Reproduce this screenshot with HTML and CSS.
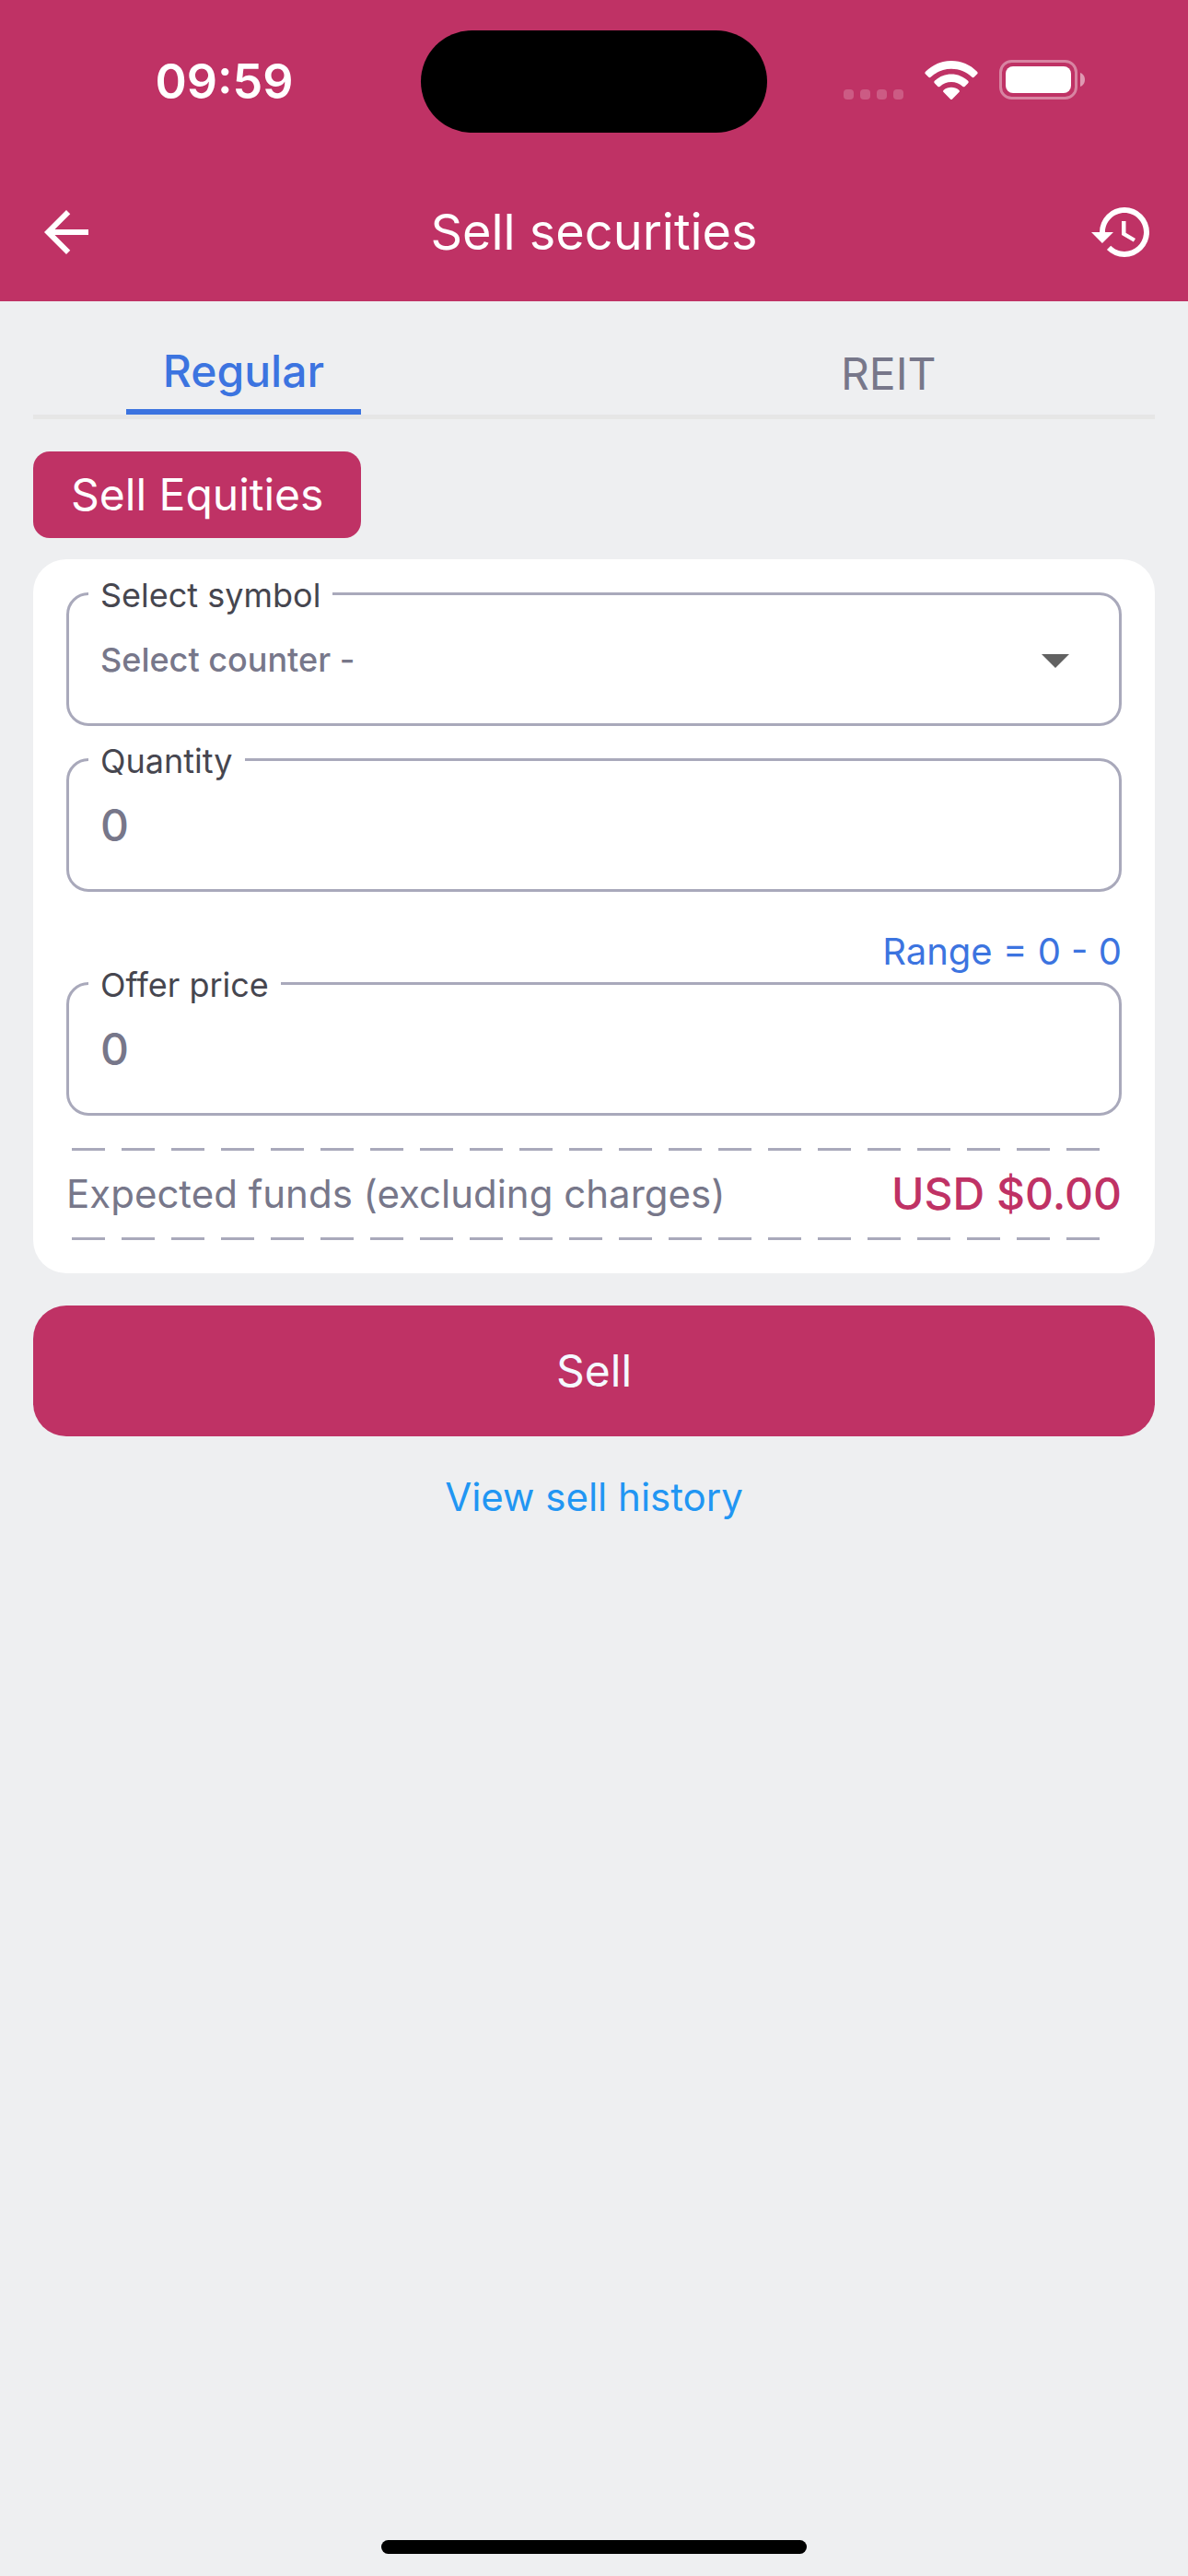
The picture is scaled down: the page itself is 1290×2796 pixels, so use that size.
FILE: index.html
```html
<!DOCTYPE html>
<html lang="en">
<head>
<meta charset="utf-8">
<meta name="viewport" content="width=device-width, initial-scale=1">
<title>Sell securities</title>
<link rel="stylesheet" href="styles.css">
</head>
<body>
<header class="header">
  <div class="status">
    <span class="time">09:59</span>
    <span class="island"></span>
    <span class="indicators">
      <svg class="signal" viewBox="0 0 65 11" aria-hidden="true"><rect width="11" height="11" rx="4"/><rect x="18" width="11" height="11" rx="4"/><rect x="36" width="11" height="11" rx="4"/><rect x="54" width="11" height="11" rx="4"/></svg>
      <svg class="wifi" viewBox="0 0 58 42" aria-hidden="true">
        <path d="M1.300 11.500C8.500 4.200 18 0 29 0s20.500 4.200 27.700 11.500c1.200 1.200 1.200 2 .2 3l-3 3c-1 .9-1.800.8-2.700-.1C45.300 12 37.500 8.800 29 8.800S12.700 12 6.800 17.400c-.9.900-1.700 1-2.700.1l-3-3c-1-1-1-1.800.2-3z"/>
        <path d="M11.100 21.600C15.800 17.200 22 14.500 29 14.500s13.200 2.700 17.900 7.100c1.100 1 1.100 1.900.1 2.900l-3.200 3.200c-.9.900-1.700.8-2.600 0-3.200-2.900-7.500-4.600-12.200-4.600s-9 1.700-12.200 4.600c-.9.800-1.700.9-2.600 0L11 24.500c-1-1-1-1.900.1-2.900z"/>
        <path d="M21 31.400c2.200-1.700 5-2.700 8-2.700s5.800 1 8 2.700c1.200.9 1.200 1.900.2 2.900l-7.100 7.100c-.8.800-1.400.8-2.200 0l-7.100-7.100c-1-1-1-2 .2-2.900z"/>
      </svg>
      <svg class="battery" viewBox="0 0 93 43" aria-hidden="true">
        <rect x="1.500" y="1.500" width="82" height="40" rx="12" fill="none" stroke="#fff" stroke-width="3" opacity=".4"/>
        <rect x="7" y="7" width="71" height="29" rx="8"/>
        <path d="M88 14c3 1 5 4 5 7.500S91 28 88 29z" opacity=".5"/>
      </svg>
    </span>
  </div>
  <div class="appbar">
    <button class="icon-button" type="button" aria-label="Back"><svg viewBox="0 0 24 24"><path d="M20 11H7.830l5.590-5.590L12 4l-8 8 8 8 1.410-1.410L7.830 13H20v-2z"/></svg></button>
    <h1 class="title">Sell securities</h1>
    <button class="icon-button" type="button" aria-label="History"><svg viewBox="0 0 24 24"><path d="M13 3a9 9 0 0 0-9 9H1l3.890 3.890.07.14L9 12H6c0-3.870 3.130-7 7-7s7 3.130 7 7-3.130 7-7 7c-1.930 0-3.680-.79-4.940-2.060l-1.420 1.420A8.954 8.954 0 0 0 13 21a9 9 0 0 0 0-18zm-1 5v5l4.280 2.540.72-1.210-3.500-2.080V8H12z"/></svg></button>
  </div>
</header>

<main class="content">
  <nav class="tabs">
    <div class="tab-slot"><a class="tab tab-active" href="#regular" aria-current="page">Regular</a></div>
    <div class="tab-slot"><a class="tab" href="#reit">REIT</a></div>
  </nav>

  <button class="chip" type="button">Sell Equities</button>

  <form class="form" id="sell-form">
    <div class="card">
      <div class="field">
        <label class="field-label" for="symbol">Select symbol</label>
        <select class="control control-select" id="symbol"><option>Select counter -</option></select>
        <svg class="caret" viewBox="0 0 30 15" aria-hidden="true"><path d="M0 0h30L15 15z"/></svg>
      </div>
      <div class="field">
        <label class="field-label" for="quantity">Quantity</label>
        <input class="control" id="quantity" type="text" inputmode="numeric" value="0">
      </div>
      <div class="price">
        <p class="range">Range = 0 - 0</p>
        <div class="field">
          <label class="field-label" for="price">Offer price</label>
          <input class="control" id="price" type="text" inputmode="decimal" value="0">
        </div>
      </div>
      <div class="summary">
        <span>Expected funds (excluding charges)</span>
        <output class="total" for="quantity price">USD $0.00</output>
      </div>
    </div>
    <button class="submit" type="submit">Sell</button>
  </form>

  <a class="history-link" href="#history">View sell history</a>
</main>

<footer class="home"><span class="home-bar"></span></footer>
</body>
</html>
```

FILE: styles.css
```css
* {
  box-sizing: border-box;
}

:root {
  --brand: #bf3265;
  --blue: #3c74e0;
  --muted: #77778a;
  --line: #a9a9bb;
  --page: #eeeff1;
}

body {
  margin: 0;
  min-height: 100vh;
  display: flex;
  flex-direction: column;
  background: var(--page);
  color: var(--muted);
  font-family: Inter, "Liberation Sans", sans-serif;
  font-size: 48px;
  line-height: 60px;
}

button,
input,
select {
  font: inherit;
  margin: 0;
  padding: 0;
  border: 0;
}

a {
  text-decoration: none;
}

svg {
  display: block;
  fill: currentColor;
}

.header {
  background: var(--brand);
  color: #fff;
}

.status {
  display: grid;
  grid-template-columns: 1fr auto 1fr;
  align-items: center;
  padding: 33px 30px 0;
}

.time {
  justify-self: center;
  font-size: 52px;
  font-weight: 600;
}

.island {
  width: 376px;
  height: 111px;
  border-radius: 56px;
  background: #000;
}

.indicators {
  justify-self: center;
  display: flex;
  align-items: flex-end;
  gap: 23px;
  padding-bottom: 4px;
}

.signal {
  width: 65px;
  height: 11px;
  opacity: .2;
}

.wifi {
  width: 58px;
  height: 42px;
}

.battery {
  width: 93px;
  height: 43px;
}

.appbar {
  display: flex;
  align-items: center;
  justify-content: space-between;
  padding: 72px 36px 39px;
}

.icon-button {
  width: 72px;
  height: 72px;
  background: none;
  color: inherit;
}

.title {
  margin: 0;
  font-size: 54px;
  font-weight: 400;
}

.content {
  flex: 1;
  display: flex;
  flex-direction: column;
  align-items: flex-start;
  padding: 36px 36px 0;
}

.tabs {
  align-self: stretch;
  display: grid;
  grid-template-columns: 37.5% 47.5%;
  justify-content: space-between;
  border-bottom: 5px solid #e6e6e6;
}

.tab-slot {
  display: flex;
  justify-content: center;
}

.tab {
  padding: 13px 40px 14px;
  color: var(--muted);
}

.tab-active {
  padding-top: 10px;
  padding-bottom: 11px;
  border-bottom: 6px solid var(--blue);
  color: var(--blue);
  font-weight: 500;
}

.chip {
  margin: 35px 0 23px;
  padding: 17px 41px;
  border-radius: 18px;
  background: var(--brand);
  color: #fff;
}

.form {
  align-self: stretch;
  display: flex;
  flex-direction: column;
  gap: 35px;
}

.card {
  display: flex;
  flex-direction: column;
  gap: 35px;
  padding: 36px;
  border-radius: 36px;
  background: #fff;
}

.field {
  position: relative;
}

.field-label {
  position: absolute;
  top: -19px;
  left: 24px;
  padding: 0 13px;
  background: #fff;
  color: #46464f;
  font-size: 36px;
  line-height: 44px;
}

.control {
  display: block;
  width: 100%;
  height: 145px;
  padding: 0 34px;
  border: 3px solid var(--line);
  border-radius: 24px;
  background: transparent;
  color: var(--muted);
  font-weight: 500;
}

.control-select {
  appearance: none;
  font-size: 36px;
}

.caret {
  position: absolute;
  top: 67px;
  right: 57px;
  width: 30px;
  height: 15px;
  color: #616161;
  pointer-events: none;
}

.range {
  margin: 0;
  padding-bottom: 3px;
  color: var(--blue);
  font-size: 40px;
  text-align: right;
}

.summary {
  display: flex;
  align-items: center;
  justify-content: space-between;
  padding: 20px 0;
  font-size: 42px;
  background:
    repeating-linear-gradient(to right, var(--line) 0 36px, transparent 36px 54px) 6px 0 / calc(100% - 30px) 3px no-repeat,
    repeating-linear-gradient(to right, var(--line) 0 36px, transparent 36px 54px) 6px 100% / calc(100% - 30px) 3px no-repeat;
}

.total {
  color: var(--brand);
  font-size: 48px;
  font-weight: 500;
}

.submit {
  padding: 41px;
  border-radius: 36px;
  background: var(--brand);
  color: #f5f8ff;
}

.history-link {
  align-self: center;
  margin-top: 36px;
  color: #2196f3;
  font-size: 42px;
}

.home {
  display: flex;
  justify-content: center;
  padding: 24px;
}

.home-bar {
  width: 462px;
  height: 15px;
  border-radius: 8px;
  background: #000;
}
```
